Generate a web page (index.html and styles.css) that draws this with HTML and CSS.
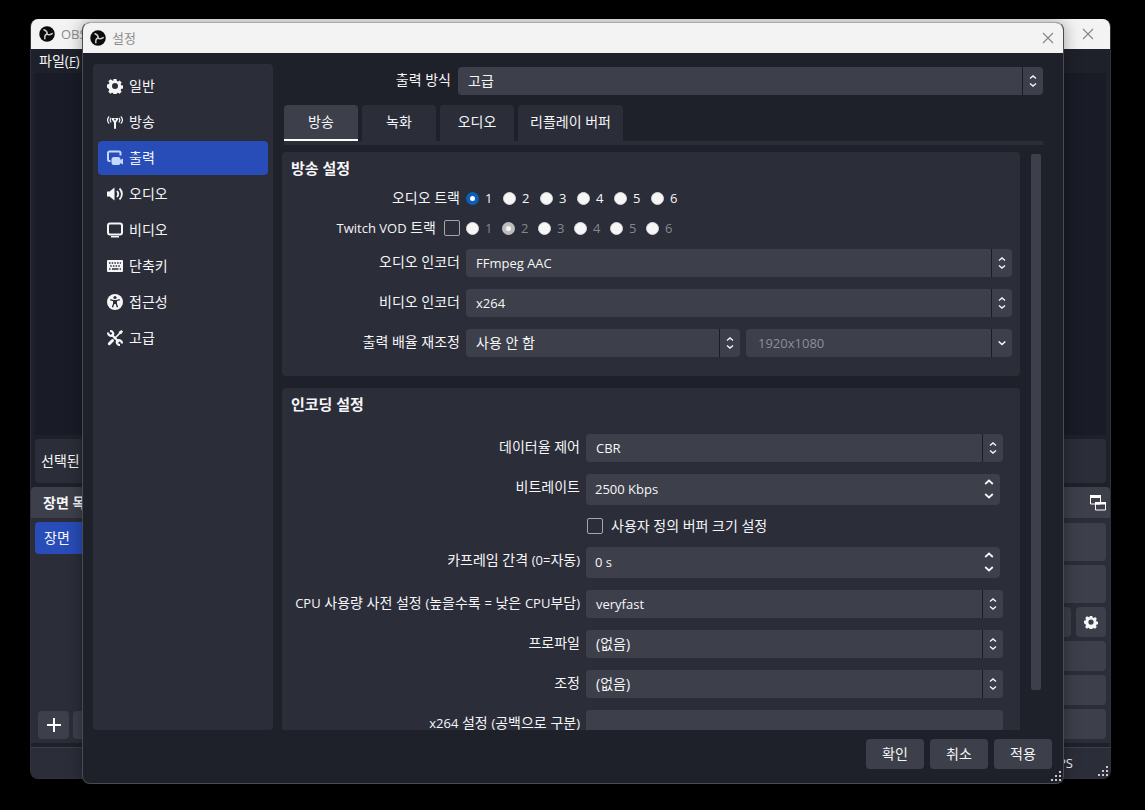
FILE: index.html
```html
<!DOCTYPE html>
<html lang="ko">
<head>
<meta charset="utf-8">
<title>설정</title>
<link rel="stylesheet" href="styles.css">
</head>
<body>
<svg class="sprite" aria-hidden="true">
  <symbol id="logo" viewBox="0 0 32 32">
    <circle cx="16" cy="16" r="15.5" fill="#0b0b0d"/>
    <g fill="none" stroke="#cfcfd2" stroke-width="3" stroke-linecap="round">
      <path id="arm" d="M16 16C17 12 14.500 9.500 10 7.500"/>
      <use href="#arm" transform="rotate(120 16 16)"/>
      <use href="#arm" transform="rotate(240 16 16)"/>
    </g>
  </symbol>
  <symbol id="close" viewBox="0 0 12 12"><path d="M1 1L11 11M11 1L1 11" fill="none" stroke="currentColor" stroke-width="1.100"/></symbol>
  <symbol id="gear" viewBox="0 0 16 16"><path fill="currentColor" fill-rule="evenodd" d="M6.500 1h3l.4 1.900 1.100.5 1.700-1 2 2-1 1.700.4 1.100 1.900.4v3l-1.900.4-.5 1.100 1 1.700-2 2-1.700-1-1.100.4-.3 1.800h-3l-.4-1.900-1.100-.4-1.700 1-2-2 1-1.700-.4-1.100L0 9.500v-3l1.900-.4.5-1.100-1-1.700 2-2 1.700 1L6.200 2.900zM8 5a3 3 0 1 0 0 6a3 3 0 0 0 0-6z"/></symbol>
  <symbol id="antenna" viewBox="0 0 16 16">
    <g fill="none" stroke="currentColor" stroke-linecap="round"><path stroke-width="1.200" d="M1.800 2.800C.3 4.800.3 7.200 1.800 9.200M14.200 2.800C15.700 4.800 15.700 7.200 14.200 9.200M3.800 4.300C3 5.500 3 6.700 3.800 7.900M12.200 4.300C13 5.500 13 6.700 12.200 7.900"/><path stroke-width="1.600" d="M5.500 5L8 8.500L10.500 5"/><path stroke-width="2" d="M8 8V14"/></g><path fill="currentColor" d="M5 4h6L8 9z"/><circle cx="8" cy="5.500" r=".9" fill="#2b2d38"/>
  </symbol>
  <symbol id="output" viewBox="0 0 16 16"><path d="M3.500 11H2.500A1.500 1.500 0 0 1 1 9.500V3A1.500 1.500 0 0 1 2.500 1.500H12A1.500 1.500 0 0 1 13.500 3V5.500" fill="none" stroke="currentColor" stroke-width="2"/><rect x="4.500" y="7" width="9" height="8" rx="2.500" fill="currentColor"/><path d="M12.500 10.500L16 8.500v6L12.500 12.500z" fill="currentColor"/></symbol>
  <symbol id="speaker" viewBox="0 0 16 16"><path fill="currentColor" d="M0 5.500h2.500L7.500 1.500v13L2.500 10.500H0z"/><path d="M10 5C11.500 6.800 11.500 9.200 10 11M12.500 2.500C15.700 5.500 15.700 10.500 12.500 13.500" fill="none" stroke="currentColor" stroke-width="1.800"/></symbol>
  <symbol id="monitor" viewBox="0 0 16 16"><rect x="1" y="1.500" width="14" height="11" rx="2" fill="none" stroke="currentColor" stroke-width="2"/><path d="M4 14h8v1.500H4z" fill="currentColor"/></symbol>
  <symbol id="keyboard" viewBox="0 0 16 16"><rect y="2" width="16" height="12" rx="1" fill="currentColor"/><path stroke="#2b2d38" stroke-width="1.500" stroke-dasharray="1.500 1.200" d="M2 4.900H14M3.200 7.900H14"/><path stroke="#2b2d38" stroke-width="1.500" d="M2 11h1.500M5 11h6.500M12.700 11H14"/></symbol>
  <symbol id="access" viewBox="0 0 16 16"><circle cx="8" cy="8" r="8" fill="currentColor"/><circle cx="8" cy="3.500" r="1.600" fill="#2b2d38"/><path d="M3.200 5.700L6.800 6.700V9.500L5.500 13.200M12.800 5.700L9.200 6.700V9.500L10.500 13.200" fill="none" stroke="#2b2d38" stroke-width="1.400"/><path d="M6.200 6h3.600v4H6.200z" fill="#2b2d38"/></symbol>
  <symbol id="tools" viewBox="0 0 16 16"><g fill="none" stroke="currentColor"><path stroke-width="2.200" d="M4.500 4.500L12 12"/><path stroke-width="1.700" d="M13.500 2.500L7 9"/><path stroke-width="3" stroke-linecap="round" d="M5.500 10.500L2.300 13.700"/><path stroke-width="2.200" d="M1 2.500C1 5.500 4 6.500 5.500 5.200S6 1 3 1M15 13.500C15 10.500 12 9.500 10.500 10.800S10 15 13 15"/></g><path fill="currentColor" d="M14.500 0L16 1.500L14 4.500L11.500 2z"/></symbol>
  <symbol id="updown" viewBox="0 0 8 14"><path d="M1 4.500L4 2L7 4.500M1 9.500L4 12L7 9.500" fill="none" stroke="currentColor" stroke-width="1.400"/></symbol>
  <symbol id="down" viewBox="0 0 8 14"><path d="M.7 5.500L4 8.500L7.300 5.500" fill="none" stroke="currentColor" stroke-width="1.600"/></symbol>
  <symbol id="spin" viewBox="0 0 10 20"><path d="M1.200 5L5 1.500L8.800 5M1.200 15L5 18.500L8.800 15" fill="none" stroke="currentColor" stroke-width="1.700"/></symbol>
  <symbol id="grip" viewBox="0 0 10 10"><path fill="#c9cad0" d="M8 0h2v2H8zM4 4h2v2H4zM8 4h2v2H8zM0 8h2v2H0zM4 8h2v2H4zM8 8h2v2H8z"/></symbol>
  <symbol id="popout" viewBox="0 0 16 16"><path d="M.5 1h10v8H.500zM5.500 8h10v7h-10z" fill="#3d3f4b" stroke="#fff"/><path d="M0 0h11v3H0zM5 7h11v2.500H5z" fill="#fff"/></symbol>
</svg>

<div class="window main-window">
  <header class="titlebar">
    <svg class="icon"><use href="#logo"/></svg>
    <span class="titlebar-text">OBS</span>
    <button class="close" aria-label="닫기"><svg><use href="#close"/></svg></button>
  </header>
  <nav class="menubar">파일(<u class="latin">F</u>)</nav>
  <div class="preview"></div>
  <div class="context-bar">선택된</div>
  <div class="dock-head"><strong>장면 목록</strong><svg class="icon"><use href="#popout"/></svg></div>
  <div class="docks">
    <section class="scenes">
      <div class="scene">장면</div>
      <div class="scene-tools">
        <button class="tool" aria-label="추가"><svg class="icon" viewBox="0 0 16 16"><path d="M8 1V15M1 8H15" stroke="#fff" stroke-width="2"/></svg></button>
        <button class="tool" aria-label="제거"></button>
      </div>
    </section>
    <section class="controls">
      <button class="control tall" aria-label="방송 시작"></button>
      <button class="control tall" aria-label="녹화 시작"></button>
      <div class="control-row">
        <button class="control" aria-label="가상 카메라"></button>
        <button class="control gear" aria-label="가상 카메라 설정"><svg><use href="#gear"/></svg></button>
      </div>
      <button class="control" aria-label="스튜디오 모드"></button>
      <button class="control" aria-label="설정"></button>
      <button class="control" aria-label="끝내기"></button>
    </section>
  </div>
  <footer class="statusbar latin">FPS</footer>
  <svg class="grip"><use href="#grip"/></svg>
</div>

<div class="window dialog" role="dialog" aria-label="설정">
  <header class="titlebar">
    <svg class="icon"><use href="#logo"/></svg>
    <span class="titlebar-text">설정</span>
    <button class="close" aria-label="닫기"><svg><use href="#close"/></svg></button>
  </header>
  <div class="dialog-body">
    <nav class="sidebar">
      <button class="nav-item"><svg class="icon"><use href="#gear"/></svg>일반</button>
      <button class="nav-item"><svg class="icon"><use href="#antenna"/></svg>방송</button>
      <button class="nav-item selected"><svg class="icon"><use href="#output"/></svg>출력</button>
      <button class="nav-item"><svg class="icon"><use href="#speaker"/></svg>오디오</button>
      <button class="nav-item"><svg class="icon"><use href="#monitor"/></svg>비디오</button>
      <button class="nav-item"><svg class="icon"><use href="#keyboard"/></svg>단축키</button>
      <button class="nav-item"><svg class="icon"><use href="#access"/></svg>접근성</button>
      <button class="nav-item"><svg class="icon"><use href="#tools"/></svg>고급</button>
    </nav>
    <main class="page">
      <div class="mode">
        <label class="label" for="mode">출력 방식</label>
        <span class="select"><select id="mode"><option>고급</option></select><span class="arrow"><svg><use href="#updown"/></svg></span></span>
      </div>
      <div class="tabs">
        <button class="tab active">방송</button>
        <button class="tab">녹화</button>
        <button class="tab">오디오</button>
        <button class="tab">리플레이 버퍼</button>
      </div>
      <div class="scroll">
        <div class="scroll-content">
          <section class="group streaming">
            <h2>방송 설정</h2>
            <div class="form">
              <span class="label short" id="track">오디오 트랙</span>
              <div class="radios" role="radiogroup" aria-labelledby="track">
                <label><input type="radio" name="track" checked>1</label>
                <label><input type="radio" name="track">2</label>
                <label><input type="radio" name="track">3</label>
                <label><input type="radio" name="track">4</label>
                <label><input type="radio" name="track">5</label>
                <label><input type="radio" name="track">6</label>
              </div>
              <label class="label short vod"><span><span class="latin">Twitch VOD</span> 트랙</span><input type="checkbox"></label>
              <div class="radios disabled" role="radiogroup" aria-label="Twitch VOD 트랙">
                <label><input type="radio" name="vod" disabled>1</label>
                <label><input type="radio" name="vod" disabled checked>2</label>
                <label><input type="radio" name="vod" disabled>3</label>
                <label><input type="radio" name="vod" disabled>4</label>
                <label><input type="radio" name="vod" disabled>5</label>
                <label><input type="radio" name="vod" disabled>6</label>
              </div>
              <label class="label" for="aenc">오디오 인코더</label>
              <span class="select latin"><select id="aenc"><option>FFmpeg AAC</option></select><span class="arrow"><svg><use href="#updown"/></svg></span></span>
              <label class="label" for="venc">비디오 인코더</label>
              <span class="select latin"><select id="venc"><option>x264</option></select><span class="arrow"><svg><use href="#updown"/></svg></span></span>
              <label class="label" for="rescale">출력 배율 재조정</label>
              <div class="pair">
                <span class="select"><select id="rescale"><option>사용 안 함</option></select><span class="arrow"><svg><use href="#updown"/></svg></span></span>
                <span class="select latin"><select aria-label="해상도" disabled><option>1920x1080</option></select><span class="arrow"><svg><use href="#down"/></svg></span></span>
              </div>
            </div>
          </section>
          <section class="group encoding">
            <h2>인코딩 설정</h2>
            <div class="form">
              <label class="label" for="rate">데이터율 제어</label>
              <span class="select latin"><select id="rate"><option>CBR</option></select><span class="arrow"><svg><use href="#updown"/></svg></span></span>
              <label class="label" for="bitrate">비트레이트</label>
              <span class="spin latin"><input id="bitrate" type="text" value="2500 Kbps"><svg><use href="#spin"/></svg></span>
              <label class="check"><input type="checkbox">사용자 정의 버퍼 크기 설정</label>
              <label class="label" for="keyint">카프레임 간격 <span class="latin">(0=</span>자동<span class="latin">)</span></label>
              <span class="spin latin"><input id="keyint" type="text" value="0 s"><svg><use href="#spin"/></svg></span>
              <label class="label" for="preset"><span class="latin">CPU</span> 사용량 사전 설정 <span class="latin">(</span>높을수록 <span class="latin">=</span> 낮은 <span class="latin">CPU</span>부담<span class="latin">)</span></label>
              <span class="select latin"><select id="preset"><option>veryfast</option></select><span class="arrow"><svg><use href="#updown"/></svg></span></span>
              <label class="label" for="profile">프로파일</label>
              <span class="select"><select id="profile"><option>(없음)</option></select><span class="arrow"><svg><use href="#updown"/></svg></span></span>
              <label class="label" for="tune">조정</label>
              <span class="select"><select id="tune"><option>(없음)</option></select><span class="arrow"><svg><use href="#updown"/></svg></span></span>
              <label class="label" for="x264"><span class="latin">x264</span> 설정 <span class="latin">(</span>공백으로 구분<span class="latin">)</span></label>
              <input class="text" id="x264" type="text">
            </div>
          </section>
        </div>
        <div class="scrollbar"><div class="thumb"></div></div>
      </div>
    </main>
  </div>
  <footer class="actions">
    <button class="action">확인</button>
    <button class="action">취소</button>
    <button class="action">적용</button>
  </footer>
  <svg class="grip"><use href="#grip"/></svg>
</div>
</body>
</html>
```
FILE: styles.css
```css
:root {
  --base: #1f212a;
  --panel: #2b2d38;
  --field: #3d3f4a;
  --accent: #284cb8;
  --text: #f6f6f8;
}

* { box-sizing: border-box; }

html, body { height: 100%; }

body {
  margin: 0;
  overflow: hidden;
  background: #000;
  color: var(--text);
  font: 14px/20px "Open Sans", "Noto Sans CJK KR", sans-serif;
}

button, input, select {
  margin: 0;
  padding: 0;
  border: 0;
  color: inherit;
  font: inherit;
}

.sprite { position: absolute; width: 0; height: 0; }
.latin { font-size: 13px; }
.icon { flex: none; width: 16px; height: 16px; }

/* Windows */
.window {
  position: absolute;
  display: flex;
  flex-direction: column;
  overflow: hidden;
  border-radius: 8px;
}

.main-window { inset: 19px 34px 31px 30px; background: var(--base); border: 1px solid #30323a; border-top: 0; }

.dialog {
  inset: 22px 81px 26px 82px;
  background: var(--base);
  border: 1px solid #4a4b52;
  border-top-color: #a8a8a8;
  box-shadow: 0 0 16px rgba(0, 0, 0, 0.35);
}

.titlebar {
  flex: none;
  display: flex;
  align-items: center;
  height: 30px;
  padding: 0 9px 1px 7px;
  background: #f3f3f3;
  color: #8b8b8b;
}

.main-window .titlebar { padding-left: 8px; padding-right: 16px; }
.titlebar-text { flex: 1; margin-left: 6px; font-size: 13px; }
.close { display: grid; background: none; color: #858585; }
.close svg { width: 12px; height: 12px; }
.grip { position: absolute; right: 2px; bottom: 2px; width: 10px; height: 10px; }

/* Main window */
.menubar { flex: none; height: 24px; padding: 2px 8px; }
.preview { flex: 1; margin: 0 4px; background: #191b26; }
.context-bar { flex: none; height: 44px; margin: 4px 4px; padding: 12px 6px; border-radius: 4px; background: var(--panel); }

.dock-head {
  flex: none;
  display: flex;
  align-items: center;
  justify-content: space-between;
  height: 31px;
  padding: 0 4px 0 12px;
  border-radius: 4px 4px 0 0;
  background: var(--field);
}

.docks { flex: none; display: flex; justify-content: space-between; height: 225px; background: var(--panel); }
.scenes { display: flex; flex-direction: column; justify-content: space-between; width: 200px; padding: 4px 4px 4px; }
.scene { padding: 6px 9px; border-radius: 4px; background: var(--accent); }
.scene-tools { display: flex; gap: 4px; padding: 0 3px; }
.tool { display: grid; place-items: center; width: 31px; height: 28px; border-radius: 4px; background: var(--field); }
.controls { display: flex; flex-direction: column; gap: 4px; width: 200px; padding: 5px 4px 4px; }
.control { width: 100%; height: 30px; border-radius: 4px; background: var(--field); }
.control.tall { height: 38px; }
.control-row { display: flex; gap: 5px; }
.control.gear { flex: none; display: grid; place-items: center; width: 30px; }
.gear svg { width: 14px; height: 14px; }

.statusbar {
  flex: none;
  height: 31px;
  margin-top: 4px;
  padding: 5px 37px;
  border-top: 1px solid var(--field);
  background: var(--panel);
  text-align: right;
}

/* Dialog */
.dialog-body { flex: 1; display: flex; gap: 9px; min-height: 0; padding: 11px 20px 0 10px; }

.sidebar {
  flex: none;
  display: flex;
  flex-direction: column;
  gap: 2px;
  width: 180px;
  padding: 5px;
  border-radius: 4px;
  background: var(--panel);
}

.nav-item {
  display: flex;
  align-items: center;
  gap: 6px;
  height: 34px;
  padding: 0 9px;
  border-radius: 4px;
  background: none;
}

.nav-item.selected { background: var(--accent); }
.nav-item.selected .icon { color: #c3d9ff; }

.page { flex: 1; display: flex; flex-direction: column; min-width: 0; padding-top: 3px; }
.mode { display: grid; grid-template-columns: 169px 1fr; column-gap: 7px; }

.tabs { display: flex; gap: 4px; margin: 10px 0 7px 2px; border-bottom: 4px solid var(--panel); }
.tab { min-width: 74px; height: 36px; padding: 0 12px; border-bottom: 2px solid transparent; border-radius: 4px 4px 0 0; background: var(--panel); }
.tab.active { border-bottom-color: #fff; background: var(--field); }

.scroll { flex: 1; display: flex; gap: 11px; min-height: 0; }
.scroll-content { flex: 1; min-width: 0; overflow: hidden; }
.scrollbar { width: 10px; margin: 2px 2px 0 0; }
.thumb { height: 93%; border-radius: 2px; background: var(--field); }

.group { padding: 6px 8px 19px 9px; border-radius: 4px; background: var(--panel); }
.group h2 { margin: 0 0 11px; font-size: 15px; line-height: 20px; }
.form { display: grid; grid-template-columns: 169px 1fr; gap: 12px 6px; }

.encoding { margin-top: 12px; padding-right: 17px; }
.encoding h2 { margin-bottom: 20px; }
.encoding .form { grid-template-columns: 289px 1fr; }

.label { line-height: 26px; text-align: right; white-space: nowrap; }
.label.short { line-height: 18px; }
.vod { display: flex; align-items: center; justify-content: flex-end; gap: 8px; }

.select { position: relative; display: flex; min-width: 0; height: 28px; }
.select select {
  appearance: none;
  width: 100%;
  padding: 0 30px 0 10px;
  border-radius: 4px;
  background: var(--field);
}
.select select:disabled { padding-left: 12px; color: #8d8f97; opacity: 1; }

.arrow {
  position: absolute;
  inset: 0 0 0 auto;
  display: grid;
  place-items: center;
  width: 21px;
  border-left: 1px solid #1a1c25;
  pointer-events: none;
}
.arrow svg { width: 8px; height: 14px; }

.pair { display: grid; grid-template-columns: 274fr 266fr; gap: 6px; }

.spin { display: flex; align-items: center; height: 31px; margin-right: 3px; padding: 0 6px 1px 9px; border-radius: 4px; background: var(--field); }
.spin input { flex: 1; min-width: 0; background: none; outline: 0; }
.spin svg { width: 10px; height: 20px; }
.text { height: 28px; border-radius: 4px; background: var(--field); }

.check { grid-column: 2; display: flex; align-items: center; gap: 8px; height: 18px; padding-left: 1px; }
input[type="checkbox"] { appearance: none; flex: none; width: 16px; height: 16px; border: 1px solid #a5a6ac; border-radius: 2px; }

.radios { display: flex; gap: 10px; font-size: 13px; line-height: 18px; }
.radios label { display: flex; align-items: center; gap: 6px; width: 27px; }
.radios.disabled { gap: 9px; color: #85878f; }
input[type="radio"] { appearance: none; flex: none; width: 13px; height: 13px; border: 1px solid #d8d8d8; border-radius: 50%; background: #f6f6f6; }
input[type="radio"]:checked { border: 4px solid #0b5fb9; background: #fff; }
input[type="radio"]:checked:disabled { border-color: #bdbdbd; background: #f3f3f3; }

.actions { flex: none; display: flex; justify-content: flex-end; gap: 6px; padding: 9px 11px 14px; }
.action { width: 58px; height: 30px; border-radius: 4px; background: var(--field); }
```
